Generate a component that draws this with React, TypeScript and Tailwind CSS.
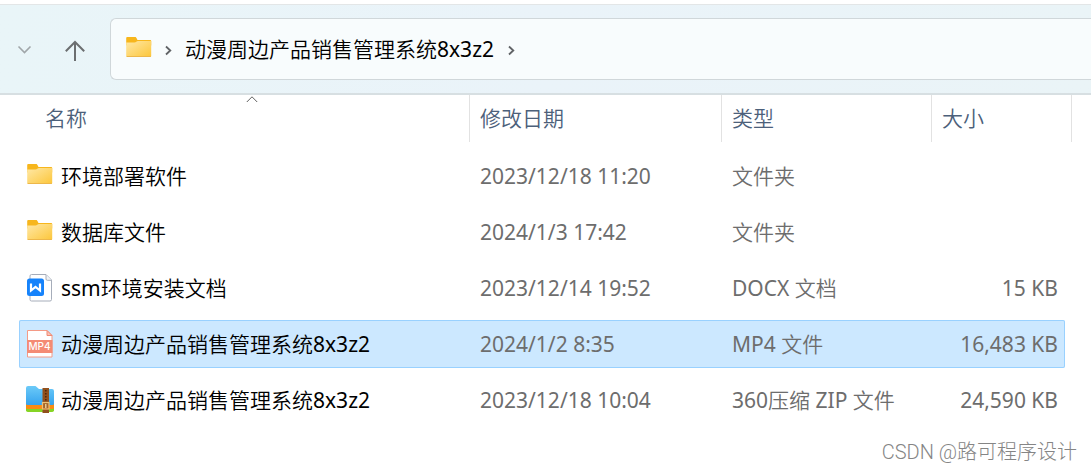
import React from 'react';
import clsx from 'clsx';

type FileKind = 'folder' | 'docx' | 'mp4' | 'zip';

interface FileEntry {
  name: string;
  kind: FileKind;
  modified: string;
  type: string;
  size?: string;
  selected?: boolean;
}

const FILES: FileEntry[] = [
  { name: '环境部署软件', kind: 'folder', modified: '2023/12/18 11:20', type: '文件夹' },
  { name: '数据库文件', kind: 'folder', modified: '2024/1/3 17:42', type: '文件夹' },
  { name: 'ssm环境安装文档', kind: 'docx', modified: '2023/12/14 19:52', type: 'DOCX 文档', size: '15 KB' },
  { name: '动漫周边产品销售管理系统8x3z2', kind: 'mp4', modified: '2024/1/2 8:35', type: 'MP4 文件', size: '16,483 KB', selected: true },
  { name: '动漫周边产品销售管理系统8x3z2', kind: 'zip', modified: '2023/12/18 10:04', type: '360压缩 ZIP 文件', size: '24,590 KB' },
];

const FolderIcon: React.FC<{ id: string }> = ({ id }) => (
  <svg className="w-7 h-7 shrink-0" viewBox="0 0 28 28" aria-hidden="true">
    <defs>
      <linearGradient id={id} x1="0" y1="0" x2="1" y2="1">
        <stop offset="0" stopColor="#ffe8a6" />
        <stop offset="1" stopColor="#fcc63a" />
      </linearGradient>
    </defs>
    <path d="M1.200 3A1 1 0 0 1 2.200 2h7.800c.8 0 1.200.5 1.600 1.200L12.500 5H25.200a1 1 0 0 1 1 1v4.500H1.200z" fill="#f7b61c" />
    <path d="M1.200 7.500h8.300c1.500 0 2-1.500 3.500-1.500h13.200v15a1 1 0 0 1-1 1H2.200A1 1 0 0 1 1.200 21z" fill={`url(#${id})`} />
    <path d="M1.700 21.500h24" stroke="#edb74a" strokeWidth="1" />
  </svg>
);

const DocxIcon: React.FC = () => (
  <svg className="w-7 h-7 shrink-0" viewBox="0 0 28 28" aria-hidden="true">
    <path d="M5.500.5H20l5.500 5.500v19.500a1.500 1.500 0 0 1-1.500 1.500H5.500A1.500 1.500 0 0 1 4 25.500V2A1.500 1.500 0 0 1 5.500.5z" fill="#fff" stroke="#a6adba" />
    <path d="M20 .8v4.200A1.300 1.300 0 0 0 21.300 6.300h4.200" fill="#f0f2f5" stroke="#a6adba" />
    <rect x="1" y="4.500" width="17" height="17.500" rx="2.500" fill="#1683fb" />
    <path d="M5 9.500v7l4.500-3.600 4.500 3.600v-7" fill="none" stroke="#fff" strokeWidth="2.200" />
  </svg>
);

const Mp4Icon: React.FC = () => (
  <svg className="w-7 h-7 shrink-0" viewBox="0 0 28 28" aria-hidden="true">
    <path d="M1.500.5H21l5 5v21.500H1.500z" fill="#fff" stroke="#f49a86" />
    <path d="M21 .5v5h5z" fill="#f9c3b6" stroke="#f08a74" />
    <rect x="1" y="10" width="25.500" height="13" fill="#f48b74" />
    <text x="13.500" y="20" textAnchor="middle" fill="#fff" fontSize="10" fontWeight="500" fontFamily="Inter, sans-serif">MP4</text>
  </svg>
);

const ZipIcon: React.FC = () => (
  <svg className="w-7 h-7 shrink-0" viewBox="0 0 28 28" aria-hidden="true">
    <defs>
      <linearGradient id="zip-blue" x1="0" y1="0" x2="0" y2="1">
        <stop offset="0" stopColor="#6ccaf8" />
        <stop offset="1" stopColor="#35a3ee" />
      </linearGradient>
    </defs>
    <path d="M0 18h28v6.200a1.800 1.800 0 0 1-1.800 1.800H1.800A1.800 1.800 0 0 1 0 24.200z" fill="#86d425" />
    <path d="M0 15h28v6.500a1.500 1.500 0 0 1-1.500 1.500h-25A1.500 1.500 0 0 1 0 21.500z" fill="#fb8b12" />
    <path d="M0 2a2 2 0 0 1 2-2h7.500L13 3h13a2 2 0 0 1 2 2v12.500a1.500 1.500 0 0 1-1.500 1.500h-25A1.500 1.500 0 0 1 0 17.500z" fill="url(#zip-blue)" />
    <rect x="16.500" y="2" width="6.500" height="25" fill="#91501d" />
    <path d="M19.800 4v11" stroke="#4c260c" strokeWidth="1.500" strokeDasharray="1.500 1.500" />
    <rect x="16.500" y="16.500" width="6.500" height="6.500" fill="#a5642b" stroke="#efc071" strokeWidth="1.200" />
    <path d="M19.800 18v4" stroke="#fbe0a2" strokeWidth="1.200" />
  </svg>
);

const FileIcon: React.FC<{ kind: FileKind; id: string }> = ({ kind, id }) => {
  switch (kind) {
    case 'docx':
      return <DocxIcon />;
    case 'mp4':
      return <Mp4Icon />;
    case 'zip':
      return <ZipIcon />;
    default:
      return <FolderIcon id={id} />;
  }
};

const CrumbChevron: React.FC = () => (
  <svg className="w-2 h-3 shrink-0" viewBox="0 0 8 12" fill="none" stroke="#606366" strokeWidth="1.800" aria-hidden="true">
    <path d="M1 1.500 5.300 5.500 1 9.500" />
  </svg>
);

const AddressBar: React.FC = () => (
  <header className="border-t border-[#e3e6e7] bg-linear-to-r from-[#e9f5f8] via-[#eaf3f9] to-[#eaf4f7]">
    <nav className="flex items-center h-[90px] border-b-2 border-[#d7dfe2]" aria-label="地址栏">
      <button type="button" aria-label="最近位置" className="ml-4 w-4 h-8 flex items-center justify-center">
        <svg className="w-4 h-4" viewBox="0 0 16 16" fill="none" stroke="#a0a6a9" strokeWidth="1.600">
          <path d="M2.500 5.500 8.500 11.500 14.500 5.500" />
        </svg>
      </button>
      <button type="button" aria-label="向上" className="ml-8 mt-1 w-6 h-8 flex items-center justify-center">
        <svg className="w-6 h-6" viewBox="0 0 24 24" fill="none" stroke="#6b6e70" strokeWidth="2">
          <path d="M11 22V3M1.800 12.200 11 3l9.200 9.200" />
        </svg>
      </button>
      <div className="ml-[22px] flex-1 h-[62px] flex items-center pl-3.5 border border-r-0 border-[#d0d7da] rounded-l-md bg-[#f8fcfd]">
        <FolderIcon id="folder-crumb" />
        <span className="ml-3 mt-1 flex"><CrumbChevron /></span>
        <a href="#" className="ml-3 text-black">动漫周边产品销售管理系统8x3z2</a>
        <span className="ml-3.5 mt-1 flex"><CrumbChevron /></span>
      </div>
    </nav>
  </header>
);

const FileTable: React.FC = () => (
  <table className="block px-[19px] text-left">
    <thead className="block text-[#4c607a]">
      <tr className="grid grid-cols-[minmax(0,1fr)_252px_210px_140px] h-[47px]">
        <th scope="col" aria-sort="ascending" className="relative ml-4 pl-2.5 pb-0.5 flex items-center font-normal border-r border-[#e2e2e2]">
          <svg className="absolute left-1/2 top-0 -translate-x-1/2 w-3 h-2" viewBox="0 0 12 8" fill="none" stroke="#606060" aria-hidden="true">
            <path d="M.8 7 6 1.800 11.200 7" />
          </svg>
          名称
        </th>
        <th scope="col" className="pl-2.5 pb-0.5 flex items-center font-normal border-r border-[#e2e2e2]">修改日期</th>
        <th scope="col" className="pl-2.5 pb-0.5 flex items-center font-normal border-r border-[#e2e2e2]">类型</th>
        <th scope="col" className="pl-2.5 pb-0.5 flex items-center font-normal border-r border-[#e2e2e2]">大小</th>
      </tr>
    </thead>
    <tbody className="flex flex-col gap-2 pt-2.5 pr-[7px] text-[#6d6d6d]">
      {FILES.map((file, idx) => (
        <tr
          key={idx}
          aria-selected={file.selected}
          className={clsx(
            'grid grid-cols-[minmax(0,1fr)_252px_210px_133px] items-center h-12 rounded-xs',
            file.selected && 'bg-[#cce8ff] ring-1 ring-inset ring-[#99d1ff]',
          )}
        >
          <td className="flex items-center gap-[7px] pl-[7px] text-black whitespace-nowrap">
            <FileIcon kind={file.kind} id={`folder-${idx}`} />
            {file.name}
          </td>
          <td className="pl-2.5">{file.modified}</td>
          <td className="pl-2.5">{file.type}</td>
          <td className="pr-[7px] text-right">{file.size}</td>
        </tr>
      ))}
    </tbody>
  </table>
);

const App: React.FC = () => (
  <div className="min-h-screen bg-white pt-1 text-[21px] leading-7 font-['Noto_Sans','Noto_Sans_CJK_SC_DemiLight','Noto_Sans_CJK_SC_Light','Noto_Sans_CJK_SC',sans-serif]">
    <AddressBar />
    <FileTable />
    <footer className="pt-3.5 pr-3.5 text-right text-xl leading-7 font-light text-[#858585] font-['Roboto','Noto_Sans_CJK_SC',sans-serif]">
      CSDN @路可程序设计
    </footer>
  </div>
);

export default App;
